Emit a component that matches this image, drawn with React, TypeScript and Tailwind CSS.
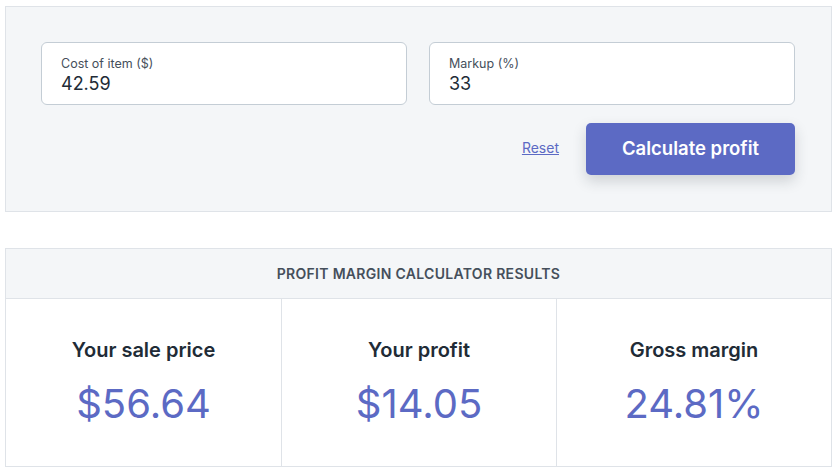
import { useState } from "react";

const results = [
  { title: "Your sale price", value: "$56.64" },
  { title: "Your profit", value: "$14.05" },
  { title: "Gross margin", value: "24.81%" },
];

export default function App() {
  const [cost, setCost] = useState("42.59");
  const [markup, setMarkup] = useState("33");

  return (
    <div
      className="w-[838px] h-[473px] bg-white pt-[6px] px-[5px] text-[#212b36]"
      style={{ fontFamily: "Inter, 'Noto Sans', sans-serif" }}
    >
      {/* Inputs */}
      <div className="w-[827px] h-[206px] bg-[#f4f6f8] border border-[#dfe3e8] pl-[35px] pr-[36px] pt-[35px]">
        <div className="flex gap-[22px]">
          <label className="flex-1 h-[63px] bg-white border border-[#c4cdd5] rounded-[6px] px-[19px] pt-[13px] block">
            <span className="block text-[12.5px] leading-[16px] text-[#454f5b]">Cost of item ($)</span>
            <input
              value={cost}
              onChange={(e) => setCost(e.target.value)}
              className="block w-full text-[18px] leading-[24px] text-[#212b36] outline-none"
            />
          </label>
          <label className="flex-1 h-[63px] bg-white border border-[#c4cdd5] rounded-[6px] px-[19px] pt-[13px] block">
            <span className="block text-[12.5px] leading-[16px] text-[#454f5b]">Markup (%)</span>
            <input
              value={markup}
              onChange={(e) => setMarkup(e.target.value)}
              className="block w-full text-[18px] leading-[24px] text-[#212b36] outline-none"
            />
          </label>
        </div>
        <div className="flex justify-end items-center gap-[27px] mt-[18px]">
          <a href="#" className="text-[14px] text-[#5c6ac4] underline -mt-[3px]">
            Reset
          </a>
          <button className="w-[209px] h-[52px] rounded-[5px] bg-[#5c6ac4] text-white text-[18.5px] font-semibold shadow-[0_6px_14px_rgba(33,43,54,0.18)]">
            Calculate profit
          </button>
        </div>
      </div>

      {/* Results */}
      <div className="mt-[36px] w-[827px] border border-[#dfe3e8]">
        <div className="h-[50px] bg-[#f4f6f8] border-b border-[#dfe3e8] flex items-center justify-center text-[14px] font-semibold text-[#454f5b] tracking-[0.3px]">
          PROFIT MARGIN CALCULATOR RESULTS
        </div>
        <div className="grid grid-cols-3">
          {results.map((r, i) => (
            <div
              key={r.title}
              className={`h-[167px] flex flex-col items-center pt-[38px] ${i > 0 ? "border-l border-[#dfe3e8]" : ""}`}
            >
              <div className="text-[20px] leading-[26px] font-semibold text-[#212b36]">{r.title}</div>
              <div className="mt-[17px] text-[40px] leading-[48px] text-[#5c6ac4]">{r.value}</div>
            </div>
          ))}
        </div>
      </div>
    </div>
  );
}
